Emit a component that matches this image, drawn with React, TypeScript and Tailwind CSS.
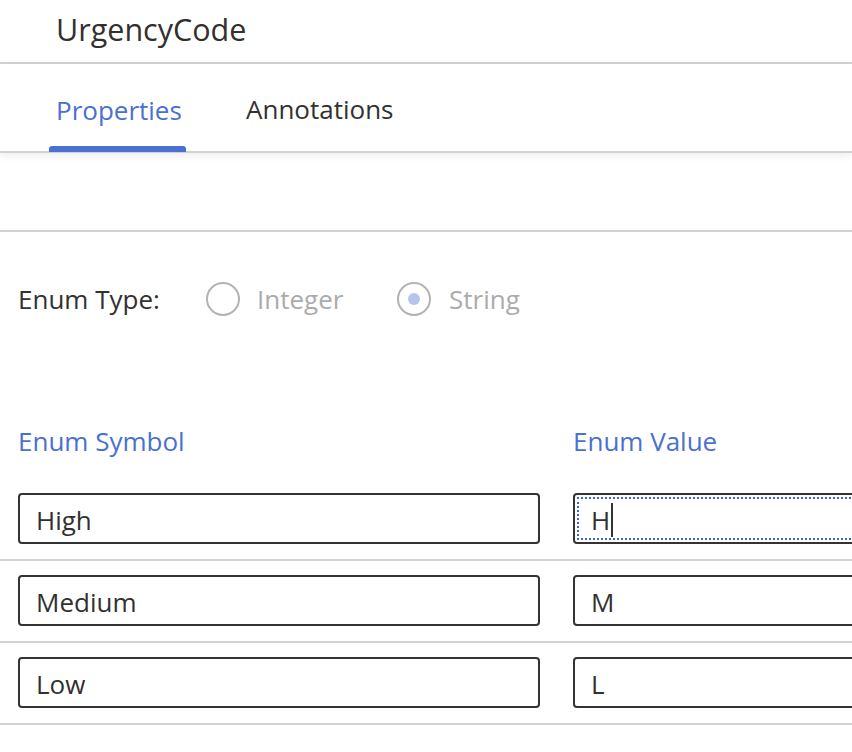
import React from 'react';

const rows = [
  { symbol: 'High', value: 'H', focused: true },
  { symbol: 'Medium', value: 'M', focused: false },
  { symbol: 'Low', value: 'L', focused: false },
];

const Radio = ({ checked }: { checked?: boolean }) => (
  <span className="flex h-[34px] w-[34px] shrink-0 items-center justify-center rounded-full border-2 border-[#b3b3b3]">
    {checked && <span className="h-[12px] w-[12px] rounded-full bg-[#b4c4ec]" />}
  </span>
);

const FieldBox = ({ text, focused }: { text: string; focused?: boolean }) => (
  <div className="relative flex h-[51px] items-center rounded-[4px] border-2 border-[#333333] pl-[16px] pt-[4px] text-[26px] text-[#323130]">
    {focused && (
      <div className="pointer-events-none absolute inset-[2px] border-2 border-dotted border-[#3a63d6]" />
    )}
    <span>{text}</span>
    {focused && <span className="ml-[1px] -mt-[2px] h-[34px] w-[2px] bg-[#333333]" />}
  </div>
);

const App = () => {
  return (
    <div className="h-[752px] w-[852px] overflow-hidden bg-white font-['Open_Sans',sans-serif] text-[#323130]">
      <div className="flex h-[64px] items-center border-b-2 border-[#d2d2d2] pl-[56px] pb-[2px] text-[30.5px]">
        UrgencyCode
      </div>

      <div className="relative z-10 flex h-[89px] border-b-2 border-[#d2d2d2] pl-[49px] shadow-[0_3px_8px_rgba(0,0,0,0.07)]">
        <div className="flex w-[137px] flex-col">
          <div className="flex flex-1 items-center pl-[7px] pt-[10px] text-[26px] text-[#4a70d2]">Properties</div>
          <div className="-mb-[1px] h-[6px] rounded-t-[3px] bg-[#4a70d2]" />
        </div>
        <div className="ml-[53px] flex flex-col">
          <div className="flex flex-1 items-center px-[7px] pt-[10px] text-[26px]">Annotations</div>
          <div className="h-[6px]" />
        </div>
      </div>

      <div className="h-[79px] border-b-2 border-[#d2d2d2]" />

      <div className="flex h-[134px] items-center pl-[18px] text-[26px]">
        <span className="w-[188px]">Enum Type:</span>
        <div className="flex w-[191px] items-center gap-[17px] text-[#ababab]">
          <Radio />
          <span>Integer</span>
        </div>
        <div className="flex items-center gap-[18px] text-[#ababab]">
          <Radio checked />
          <span>String</span>
        </div>
      </div>

      <div className="mt-[57px] grid h-[36px] grid-cols-[522px_522px] gap-x-[33px] pl-[18px] text-[26px] leading-[36px] text-[#4a70d2]">
        <span>Enum Symbol</span>
        <span>Enum Value</span>
      </div>

      <div className="mt-[20px]">
        {rows.map((row) => (
          <div key={row.symbol} className="border-b-2 border-[#d2d2d2] pt-[14px] pb-[15px]">
            <div className="grid grid-cols-[522px_522px] gap-x-[33px] pl-[18px]">
              <FieldBox text={row.symbol} />
              <FieldBox text={row.value} focused={row.focused} />
            </div>
          </div>
        ))}
      </div>
    </div>
  );
};

export default App;
